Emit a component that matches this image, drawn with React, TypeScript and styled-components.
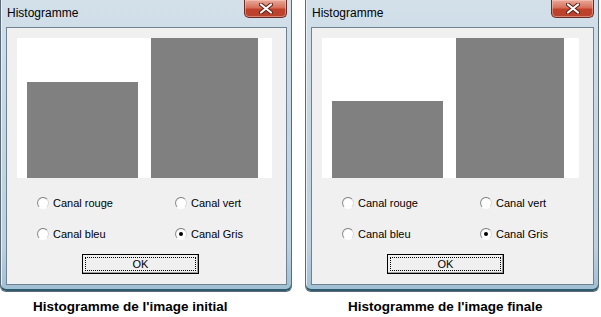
import { FC } from 'react';
import styled, { createGlobalStyle } from 'styled-components';

const GlobalStyle = createGlobalStyle`
    body {
        margin: 0;
        background: #ffffff;
    }
`;

const Page = styled.div`
    display: flex;
    gap: 13px;
    width: 601px;
    height: 317px;
    overflow: hidden;
`;

const Column = styled.div<{ $width: number }>`
    display: flex;
    flex-direction: column;
    width: ${(p) => p.$width}px;
`;

const Frame = styled.div`
    box-sizing: border-box;
    height: 292px;
    display: flex;
    flex-direction: column;
    padding: 0 4px 6px 5px;
    border: 1px solid #5b6b78;
    border-top: none;
    border-radius: 0 0 6px 6px;
    background: linear-gradient(180deg, #d3e0ea 0%, #c6d7e4 40%, #bcd0df 85%, #9fbfd3 100%);
    box-shadow: inset 0 -2px 0 #2f5a6e, inset 1px 0 0 #e9f1f7;
`;

const TitleBar = styled.div`
    height: 27px;
    display: flex;
    align-items: flex-start;
    justify-content: space-between;
`;

const Title = styled.span`
    font-family: 'Liberation Sans', Arial, sans-serif;
    font-size: 12px;
    color: #000;
    margin: 6px 0 0 1px;
`;

const CloseButton = styled.div`
    box-sizing: border-box;
    width: 43px;
    height: 18px;
    display: flex;
    align-items: center;
    justify-content: center;
    border: 1px solid #6a2b22;
    border-top: none;
    border-radius: 0 0 5px 5px;
    background: linear-gradient(180deg, #e9a99a 0%, #d6705c 45%, #c0402a 55%, #b8442f 100%);
    box-shadow: inset 0 0 0 1px rgba(255, 210, 200, 0.45);
`;

const Client = styled.div`
    flex: 1;
    display: flex;
    flex-direction: column;
    background: #f0f0f0;
    border: 1px solid #6f8292;
    padding: 10px 14px 0 10px;
`;

const Plot = styled.div`
    height: 140px;
    display: flex;
    align-items: flex-end;
    gap: 13px;
    padding: 0 14px 0 10px;
    background: #ffffff;
`;

const Bar = styled.div<{ $width: number; $height: number }>`
    width: ${(p) => p.$width}px;
    height: ${(p) => p.$height}px;
    background: #808080;
`;

const Options = styled.div`
    display: grid;
    grid-template-columns: 138px auto;
    row-gap: 19px;
    margin: 19px 0 0 20px;
`;

const RadioItem = styled.label`
    display: flex;
    align-items: center;
    gap: 4px;
    height: 12px;
    font-family: 'Liberation Sans', Arial, sans-serif;
    font-size: 11px;
    color: #000;
`;

const RadioCircle = styled.span<{ $checked?: boolean }>`
    box-sizing: border-box;
    width: 12px;
    height: 12px;
    border-radius: 50%;
    border: 1px solid;
    border-color: #7a7a7a #d8d8d8 #ffffff #8c8c8c;
    background: radial-gradient(circle at 60% 60%, #ffffff 55%, #e4e4e4 100%);
    display: flex;
    align-items: center;
    justify-content: center;
    &::after {
        content: '';
        width: 4px;
        height: 4px;
        border-radius: 50%;
        background: #000;
        display: ${(p) => (p.$checked ? 'block' : 'none')};
    }
`;

const OkButton = styled.button`
    box-sizing: border-box;
    width: 117px;
    height: 20px;
    margin: 14px 0 0 65px;
    padding: 2px;
    border: 1px solid;
    border-color: #e8e8e8 #404040 #404040 #e8e8e8;
    outline: 1px solid #000;
    outline-offset: -1px;
    background: #f0f0f0;
    box-shadow: inset -1px -1px 0 #a0a0a0;
    font-family: 'Liberation Sans', Arial, sans-serif;
    font-size: 11px;
    color: #000;
    span {
        display: flex;
        align-items: center;
        justify-content: center;
        height: 100%;
        border: 1px dotted #000;
        box-sizing: border-box;
    }
`;

const Caption = styled.div<{ $offset: number }>`
    margin-top: 7px;
    padding-left: ${(p) => p.$offset}px;
    font-family: 'Liberation Sans', Arial, sans-serif;
    font-weight: bold;
    font-size: 13.5px;
    line-height: 16px;
    color: #000;
`;

const CloseIcon: FC = () => (
    <svg width="14" height="11" viewBox="0 0 14 11">
        <path d="M2 1.5 L12 9.5 M12 1.5 L2 9.5" stroke="#5a1d14" strokeWidth="4" strokeLinecap="round" />
        <path d="M2 1.5 L12 9.5 M12 1.5 L2 9.5" stroke="#ffffff" strokeWidth="2.2" strokeLinecap="round" />
    </svg>
);

interface IDialog {
    width: number;
    left: number;
    right: number;
    caption: string;
    captionOffset: number;
}

const channels = [
    { label: 'Canal rouge', checked: false },
    { label: 'Canal vert', checked: false },
    { label: 'Canal bleu', checked: false },
    { label: 'Canal Gris', checked: true },
];

const Dialog: FC<IDialog> = ({ width, left, right, caption, captionOffset }) => (
    <Column $width={width}>
        <Frame>
            <TitleBar>
                <Title>Histogramme</Title>
                <CloseButton>
                    <CloseIcon />
                </CloseButton>
            </TitleBar>
            <Client>
                <Plot>
                    <Bar $width={111} $height={left} />
                    <Bar $width={108} $height={right} />
                </Plot>
                <Options>
                    {channels.map((c) => (
                        <RadioItem key={c.label}>
                            <RadioCircle $checked={c.checked} />
                            {c.label}
                        </RadioItem>
                    ))}
                </Options>
                <OkButton>
                    <span>OK</span>
                </OkButton>
            </Client>
        </Frame>
        <Caption $offset={captionOffset}>{caption}</Caption>
    </Column>
);

const App: FC = () => (
    <>
        <GlobalStyle />
        <Page>
            <Dialog width={292} left={96} right={140} caption="Histogramme de l'image initial" captionOffset={33} />
            <Dialog width={294} left={77} right={140} caption="Histogramme de l'image finale" captionOffset={43} />
        </Page>
    </>
);

export default App;
